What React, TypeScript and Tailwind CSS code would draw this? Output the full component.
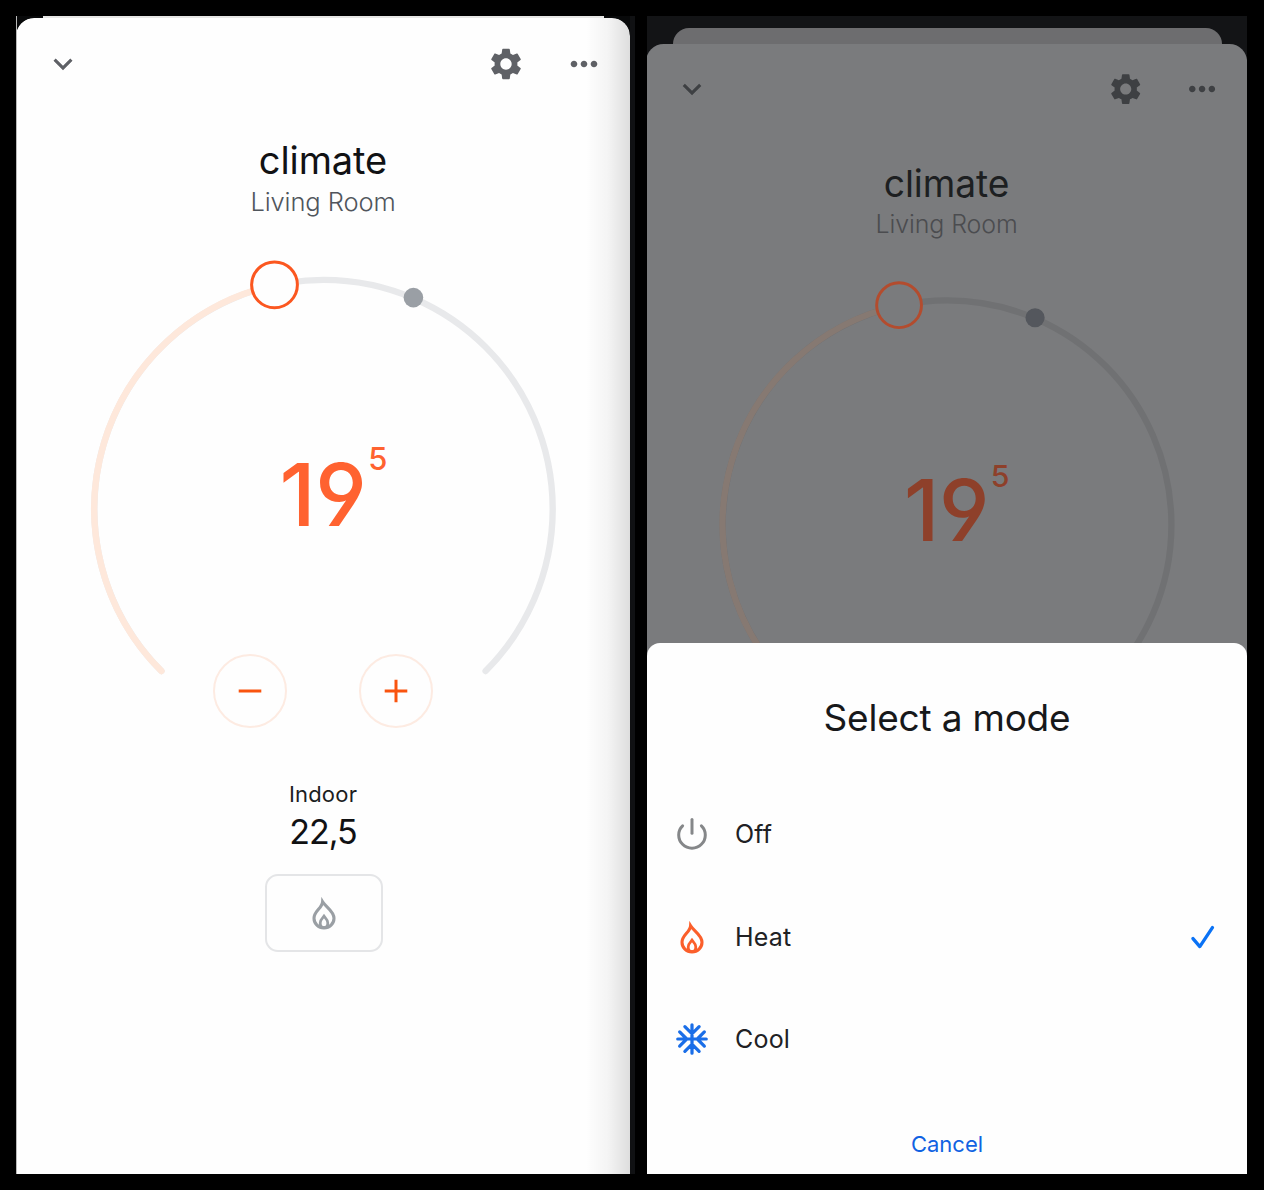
import React from "react";
import { MdKeyboardArrowDown, MdMoreHoriz, MdSettings } from "react-icons/md";

const FONT = "font-['Inter','Liberation_Sans',sans-serif]";

type Tone = {
  card: string;
  icon: string;
  title: string;
  subtitle: string;
  value: string;
  track: string;
  heat: string;
  knob: string;
  knobFill: string;
  dot: string;
};

const lightTone: Tone = {
  card: "bg-[#fefefe]",
  icon: "text-[#5f6166]",
  title: "text-[#111214]",
  subtitle: "text-[#50555c]",
  value: "text-[#ff6230]",
  track: "#e8e9eb",
  heat: "#fee8db",
  knob: "#fb5720",
  knobFill: "#fefefe",
  dot: "#9a9fa5",
};

const dimTone: Tone = {
  card: "bg-[#7a7b7d]",
  icon: "text-[#3e4043]",
  title: "text-[#1d1f21]",
  subtitle: "text-[#4b4c4f]",
  value: "text-[#8e402a]",
  track: "#707173",
  heat: "#867972",
  knob: "#b34c2e",
  knobFill: "#7a7b7d",
  dot: "#54575d",
};

function Flame({ className }: { className: string }) {
  return (
    <svg viewBox="0 0 24 33" className={className} fill="none" stroke="currentColor" strokeWidth="3.1">
      <path d="M10.6 4.8C10.2 11 2 14.2 2 21.2C2 26.6 6.4 30.9 12 30.9C17.6 30.9 22 26.6 22 21.2C22 14 13.8 10 10.6 4.8Z" strokeLinejoin="miter" />
      <path d="M12 19.2C10.8 20.8 8.2 22.6 8.2 26C8.2 28.7 9.7 30.6 12 30.6C14.3 30.6 15.8 28.7 15.8 26C15.8 22.6 13.2 20.8 12 19.2Z" strokeWidth="2.8" />
    </svg>
  );
}

function Power() {
  return (
    <svg viewBox="0 0 32 32" className="size-8 text-[#858789]" fill="none" stroke="currentColor" strokeWidth="3" strokeLinecap="round">
      <path d="M16 1.6V15.2" />
      <path d="M6.6 7.8C4.1 10.1 2.7 13.3 2.7 16.9A13.3 13.3 0 0 0 29.3 16.9C29.3 13.3 27.9 10.1 25.4 7.8" />
    </svg>
  );
}

function Snowflake() {
  return (
    <svg viewBox="0 0 24 24" className="size-[38px] text-[#1a6ee8]" fill="none" stroke="currentColor" strokeWidth="2.05" strokeLinecap="round">
      <path d="M12 3V21M3 12H21M7.5 4.2L12 8.7L16.5 4.2M7.5 19.8L12 15.3L16.5 19.8M4.2 7.5L8.7 12L4.2 16.5M19.8 7.5L15.3 12L19.8 16.5" />
    </svg>
  );
}

function Check() {
  return (
    <svg viewBox="0 0 24 24" className="size-6 text-[#0a72f5]" fill="none" stroke="currentColor" strokeWidth="3.3" strokeLinecap="round" strokeLinejoin="round">
      <path d="M2 13.6L8.8 21.6L21.4 2.6" />
    </svg>
  );
}

function Dial({ tone }: { tone: Tone }) {
  return (
    <svg viewBox="0 0 470 430" className="block h-[430px] w-[470px]" fill="none" strokeLinecap="round">
      <path d="M73.4 411.1A229.2 229.2 0 1 1 397.6 411.1" stroke={tone.track} strokeWidth="6.4" />
      <path d="M73.4 411.1A229.2 229.2 0 0 1 186.5 25.1" stroke={tone.heat} strokeWidth="6.4" />
      <circle cx="186.5" cy="24.8" r="22.9" fill={tone.knobFill} stroke={tone.knob} strokeWidth="3" />
      <circle cx="325.4" cy="37.6" r="9.8" fill={tone.dot} />
    </svg>
  );
}

function RoundButton({ plus = false }: { plus?: boolean }) {
  return (
    <button className="grid size-[74px] place-items-center rounded-full border-2 border-[#fdebe2]">
      <svg viewBox="0 0 24 24" className="size-6 text-[#f9540f]" fill="none" stroke="currentColor" strokeWidth="3">
        <path d={plus ? "M.7 12H23.3M12 .7V23.3" : "M.7 12H23.3"} />
      </svg>
    </button>
  );
}

function ClimateCard({ tone }: { tone: Tone }) {
  return (
    <section className={`flex h-[1156px] w-[614px] flex-col items-center rounded-t-[18px] ${tone.card}`}>
      <header className={`flex h-[92px] w-full items-center pr-[26px] pl-[28px] ${tone.icon}`}>
        <MdKeyboardArrowDown className="size-[38px]" />
        <MdSettings className="ml-auto size-[38px]" />
        <MdMoreHoriz className="ml-[39px] size-10" />
      </header>
      <h1 className={`mt-[25px] h-[50px] text-[38px] leading-[50px] tracking-[-0.1px] whitespace-nowrap ${tone.title}`}>climate</h1>
      <p className={`h-[34px] text-[25.5px] leading-[34px] font-[350] tracking-[-0.1px] whitespace-nowrap ${tone.subtitle}`}>Living Room</p>
      <div className="mt-[41px] grid place-items-center">
        <div className="col-start-1 row-start-1">
          <Dial tone={tone} />
        </div>
        <div className={`col-start-1 row-start-1 mt-[39px] flex items-start pl-[21px] ${tone.value}`}>
          <span className="text-[87px] leading-[100px] font-medium tracking-[-0.5px] [font-feature-settings:'cv04','ss01']">19</span>
          <span className="-mt-[6px] ml-[2px] text-[31px] leading-[40px] font-medium">5</span>
        </div>
      </div>
      <div className="-mt-[36px] flex gap-[72px]">
        <RoundButton />
        <RoundButton plus />
      </div>
      <p className="mt-[52px] text-[22px] leading-[28px] tracking-[0.2px] text-[#1c1d1f]">Indoor</p>
      <p className="mt-[3px] text-[34px] leading-[42px] tracking-[-1px] text-[#101113]">22,5</p>
      <button className="mt-[21px] ml-px grid h-[78px] w-[118px] place-items-center rounded-[13px] border-2 border-[#e4e5e7]">
        <Flame className="h-[33px] w-6 text-[#9a9fa4]" />
      </button>
    </section>
  );
}

function ModeRow({ icon, label, selected = false }: { icon: React.ReactNode; label: string; selected?: boolean }) {
  return (
    <button className="flex h-[102.5px] w-full items-center pr-[32px] pl-[26px] text-left">
      <span className="grid w-[38px] place-items-center">{icon}</span>
      <span className="ml-6 text-[25px] leading-8 tracking-[0.2px] text-[#202124]">{label}</span>
      {selected && (
        <span className="ml-auto">
          <Check />
        </span>
      )}
    </button>
  );
}

export default function App() {
  return (
    <main className={`flex h-[1190px] w-[1264px] overflow-hidden bg-black pt-4 pl-4 ${FONT}`}>
      <div className="relative h-[1158px] w-[614px] overflow-hidden border-l border-[#b9b9b9] bg-[#08090a]">
        <div className="mr-[26px] ml-[26px] h-[2px] bg-[#e6e6e5]" />
        <div className="-ml-px overflow-hidden rounded-t-[18px]">
          <ClimateCard tone={lightTone} />
        </div>
        <div className="absolute top-[2px] right-0 bottom-0 w-11 rounded-tr-[18px] bg-linear-to-r from-transparent via-black/4 to-black/13" />
      </div>
      <div className="h-[1158px] w-[5px] bg-[#101113]" />
      <div className="relative ml-3 h-[1158px] w-[600px] overflow-hidden bg-[#131416]">
        <div className="mx-auto mt-3 h-4 w-[549px] rounded-t-[16px] bg-[#6d6d6f]" />
        <div className="-ml-px h-[1130px] origin-top-left scale-[0.979]">
          <ClimateCard tone={dimTone} />
        </div>
        <div className="absolute inset-x-0 bottom-0 flex h-[531px] flex-col items-center rounded-t-[13px] bg-[#fefefe]">
          <h2 className="mt-[50px] text-[37px] leading-[50px] tracking-[-0.2px] whitespace-nowrap text-[#17181a]">Select a mode</h2>
          <div className="mt-[40px] flex w-full flex-col">
            <ModeRow icon={<Power />} label="Off" />
            <ModeRow icon={<Flame className="mt-px h-[33px] w-6 text-[#fb5f2b]" />} label="Heat" selected />
            <ModeRow icon={<Snowflake />} label="Cool" />
          </div>
          <button className="mt-[37px] text-[22px] leading-[32px] text-[#1062e2]">Cancel</button>
        </div>
      </div>
    </main>
  );
}
